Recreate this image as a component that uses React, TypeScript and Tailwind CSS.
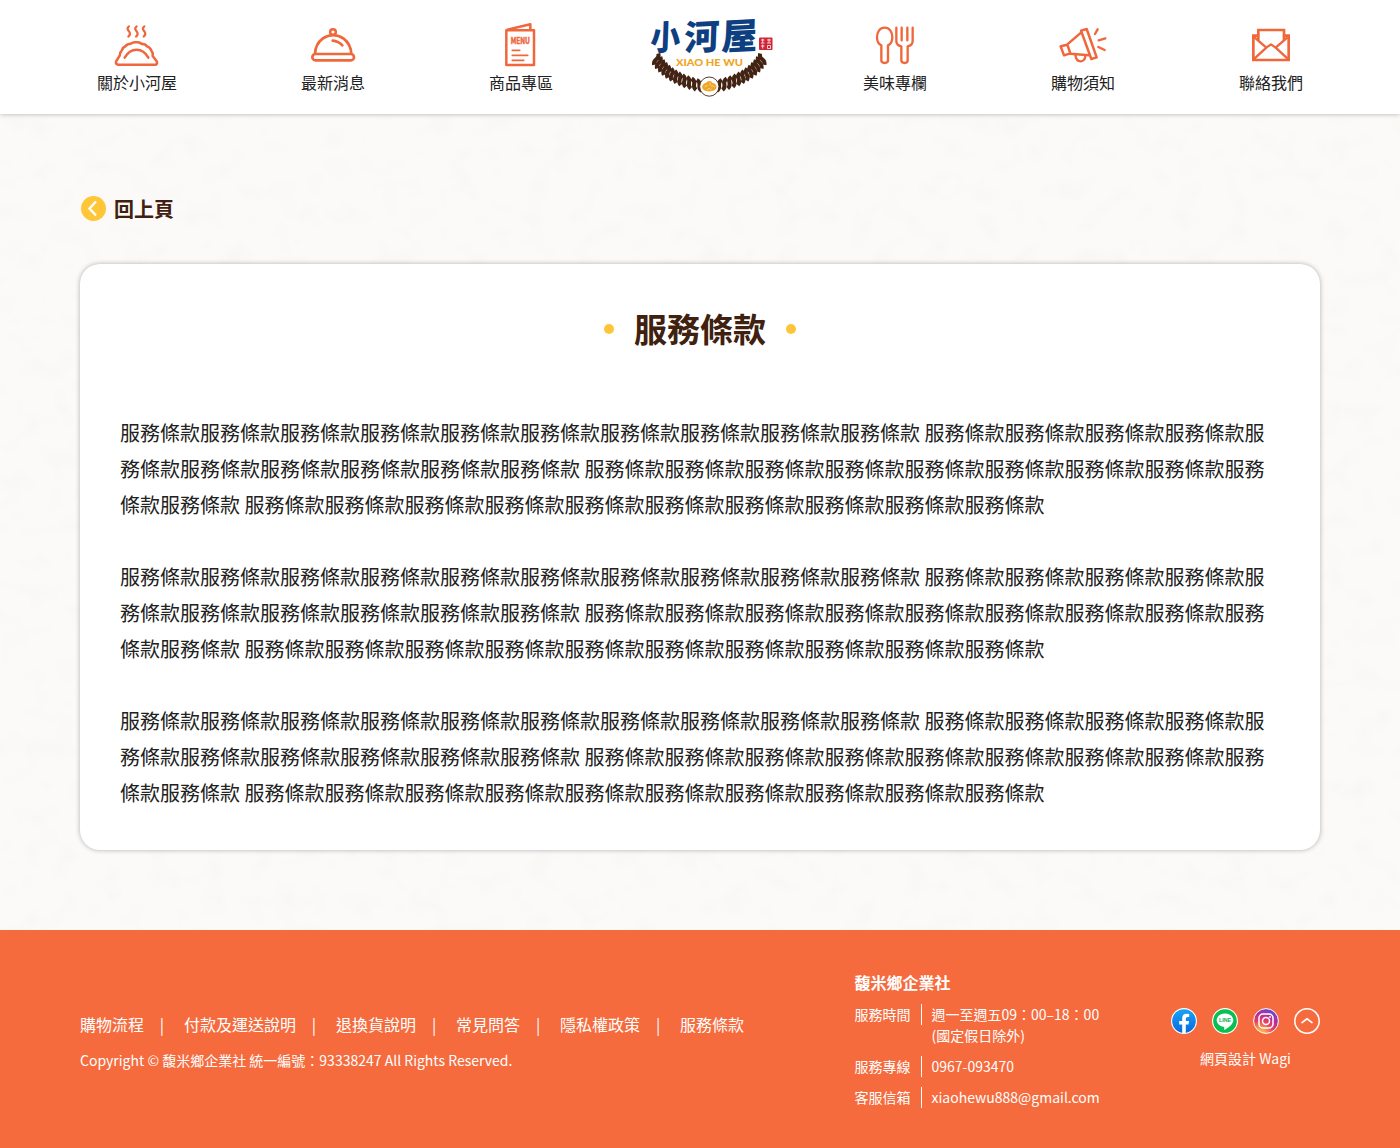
import type { ReactNode } from "react";

const ORANGE = "#ef673b";

function NavIcon({ viewBox, children }: { viewBox: string; children: ReactNode }) {
  return (
    <svg
      viewBox={viewBox}
      className="h-12 w-12"
      fill="none"
      stroke={ORANGE}
      strokeWidth="8"
      strokeLinecap="round"
      strokeLinejoin="round"
    >
      {children}
    </svg>
  );
}

const dumpling = (
  <NavIcon viewBox="69 15 144 144">
    <path d="M83 149H198Q204 145 199 137L188 123Q190 114 184 107Q181 97 171 94Q166 86 156 87Q148 80 139 82Q130 80 122 86Q112 86 107 93Q98 97 95 107Q89 112 89 122L79 138Q75 146 83 149Z" strokeWidth="7.5" />
    <path d="M104 128Q117 104 140 104Q162 104 175 128" strokeWidth="7.5" />
    <path d="M117 34Q110 39 114 45L119 52Q122 59 115 65M140 34Q133 39 137 45L142 52Q145 59 138 65M163 34Q156 39 160 45L165 52Q168 59 161 65" strokeWidth="6.5" />
  </NavIcon>
);

const cloche = (
  <NavIcon viewBox="57 15 144 144">
    <circle cx="129" cy="51" r="8.5" strokeWidth="7.5" />
    <path d="M75 116Q77 86 98 71Q129 50 161 71Q182 87 184 116" />
    <rect x="67" y="117" width="125" height="19" rx="9.5" />
    <path d="M128 77Q146 79 157 91" />
  </NavIcon>
);

const menu = (
  <NavIcon viewBox="51 15 144 144">
    <path d="M79 46H162V150H79ZM82 44L151 28V45" strokeWidth="7.5" />
    <path d="M97 106H119M97 121H143M97 136H131" strokeWidth="5.5" />
    <text
      x="121"
      y="88"
      textAnchor="middle"
      textLength="58"
      lengthAdjust="spacingAndGlyphs"
      fill={ORANGE}
      stroke={ORANGE}
      strokeWidth="1.5"
      className="font-['Noto_Sans_CJK_TC',sans-serif] text-[26px] font-bold"
    >
      MENU
    </text>
  </NavIcon>
);

const cutlery = (
  <NavIcon viewBox="48 15 144 144">
    <path d="M79 91C70 87 66 77 66 67C66 50 75 38 89 38C103 38 112 50 112 67C112 77 108 87 99 91V136Q99 144 89 144Q79 144 79 136Z" strokeWidth="7" />
    <path d="M124 38V78Q124 91 139 94V136Q139 144 149 144Q158 144 158 136V94Q173 91 173 78V38" strokeWidth="7" />
    <path d="M140 38V76M157 38V76" strokeWidth="7" />
  </NavIcon>
);

const megaphone = (
  <NavIcon viewBox="57 15 144 144">
    <path d="M62 94L82 89L91 115L72 121ZM82 88L124 52M91 116L147 121" strokeWidth="7.5" />
    <path d="M123 46L140 41L170 126L154 131Z" strokeWidth="7.5" transform="translate(0 1)" />
    <path d="M106 119Q108 139 122 139Q135 138 136 123" strokeWidth="7" />
    <path d="M165 57L173 43M176 76L196 70M175 96L194 105" strokeWidth="7" />
  </NavIcon>
);

const mail = (
  <NavIcon viewBox="66 15 144 144">
    <path d="M99 62H85V135H191V62H177" strokeLinejoin="miter" />
    <path d="M100 74V45H177V74" strokeLinejoin="miter" />
    <path d="M85 64L124 98L85 134M191 64L152 98L191 134M124 98L138 88L152 98" strokeWidth="7" />
  </NavIcon>
);

function NavItem({ icon, label }: { icon: ReactNode; label: string }) {
  return (
    <a href="#" className="flex flex-col items-center gap-0.5 text-base leading-6 text-[#212121]">
      {icon}
      <span className="whitespace-nowrap">{label}</span>
    </a>
  );
}

/* Rope strands placed along a quadratic curve; mirrored for the right side. */
const strands = Array.from({ length: 12 }, (_, i) => {
  const t = i / 11;
  const u = 1 - t;
  const x = u * u * 6 + 2 * u * t * 19 + t * t * 49;
  const y = u * u * 43 + 2 * u * t * 63 + t * t * 69.5;
  const angle = (Math.atan2(2 * u * 20 + 2 * t * 6.5, 2 * u * 13 + 2 * t * 30) * 180) / Math.PI;
  return { x, y, angle };
});

function Rope() {
  return (
    <g>
      {strands.map((s, i) => (
        <path
          key={i}
          transform={`translate(${s.x} ${s.y}) rotate(${s.angle})`}
          d="M-3.4 -5Q0.6 -3.6 0.4 0Q0.6 3.4 3.8 4.8"
          fill="none"
          stroke="#432313"
          strokeWidth="4"
        />
      ))}
    </g>
  );
}

function Logo() {
  return (
    <svg viewBox="0 0 123 82" className="h-[82px] w-[123px] overflow-visible">
      <g fill="#0e3f80" className="font-['Noto_Sans_CJK_TC',sans-serif] font-black">
        <text transform="translate(0 34.5) rotate(-3) skewX(-5) scale(.88 1)" className="text-[34px]">小</text>
        <text transform="translate(34 34.5) rotate(-3) skewX(-5)" className="text-[35px]">河</text>
        <text transform="translate(71 34) rotate(-3) skewX(-5)" className="text-[36px]">屋</text>
      </g>
      <rect x="109" y="21.5" width="13.5" height="12.5" rx="1" fill="#cf2637" />
      <path d="M111 24h3.5M112.7 22.8v4M111 27h3.5M111 30h3.5M112.7 28.5v4M117 24h4M119 22.8v4M117 27h4M117.5 29.5h3v3h-3z" stroke="#fff" strokeWidth="0.8" fill="none" />
      <Rope />
      <g transform="translate(118.5 0) scale(-1 1)">
        <Rope />
      </g>
      <text x="59.5" y="49.7" textAnchor="middle" textLength="67" lengthAdjust="spacingAndGlyphs" fill="#efa526" className="font-['Lato',sans-serif] text-[9.8px] font-black">
        XIAO HE WU
      </text>
      <circle cx="59.3" cy="70.6" r="9.6" fill="#fff" stroke="#432313" strokeWidth="0.9" />
      <path d="M52 71q1-4 4-4q1-2 3.3-2t3.3 2q3 0 4 4q-.5 4-7.3 4.6Q52.5 75 52 71Z" fill="#efa526" />
      <path d="M54.5 71q1.5-2 3-1M60 66.5v3M61 70q2-1 3.5 1M57 73.5q2-2 4.5 0" fill="none" stroke="#fff4d4" strokeWidth="0.6" />
    </svg>
  );
}

function PaperTexture() {
  return (
    <svg className="absolute inset-0 h-full w-full" aria-hidden="true">
      <filter id="paper" x="0" y="0" width="100%" height="100%">
        <feTurbulence type="fractalNoise" baseFrequency="0.04 0.045" numOctaves="2" seed="8" />
        <feColorMatrix values="0 0 0 0 0.92  0 0 0 0 0.9  0 0 0 0 0.87  1.1 0 0 0 -0.54" />
      </filter>
      <rect width="100%" height="100%" filter="url(#paper)" />
    </svg>
  );
}

function Facebook() {
  return (
    <svg viewBox="0 0 26 26" className="h-[26px] w-[26px]">
      <defs>
        <linearGradient id="fb" x1="0" y1="0" x2="0" y2="1">
          <stop offset="0" stopColor="#18a5f5" />
          <stop offset="1" stopColor="#0867df" />
        </linearGradient>
      </defs>
      <circle cx="13" cy="13" r="12.4" fill="url(#fb)" stroke="#fff" strokeWidth="1.1" />
      <path d="M11.2 25V16.6H8.2V13.1H11.2V10.5Q11.2 5.8 15.6 5.8Q17.2 5.8 18.2 6.1V9.1H16.5Q14.8 9.1 14.8 10.9V13.1H18.1L17.5 16.6H14.8V25Z" fill="#fff" />
    </svg>
  );
}

function Line() {
  return (
    <svg viewBox="0 0 26 26" className="h-[26px] w-[26px]">
      <circle cx="13" cy="13" r="12.4" fill="#06c152" stroke="#fff" strokeWidth="1.1" />
      <path d="M13 5.6C8.3 5.6 4.7 8.5 4.7 12.2C4.7 15.5 7.6 18.1 11.5 18.7C12.7 19 12.3 19.8 12.1 21.2C12.1 21.8 12.5 21.9 13.1 21.5C15.5 20.1 21.3 16.5 21.3 12.2C21.3 8.5 17.7 5.6 13 5.6Z" fill="#fff" />
      <text x="13" y="14" textAnchor="middle" textLength="12" lengthAdjust="spacingAndGlyphs" fill="#06b14b" className="font-['Liberation_Sans',sans-serif] text-[5px] font-bold">
        LINE
      </text>
    </svg>
  );
}

function Instagram() {
  return (
    <svg viewBox="0 0 26 26" className="h-[26px] w-[26px]">
      <defs>
        <radialGradient id="ig" cx="0.25" cy="1.05" r="1.1">
          <stop offset="0" stopColor="#ffd45c" />
          <stop offset="0.25" stopColor="#fb9a4c" />
          <stop offset="0.5" stopColor="#e8415f" />
          <stop offset="0.75" stopColor="#b52e9c" />
          <stop offset="1" stopColor="#5e4bd2" />
        </radialGradient>
      </defs>
      <circle cx="13" cy="13" r="12.4" fill="url(#ig)" stroke="#fff" strokeWidth="1" />
      <g fill="none" stroke="#fff" strokeWidth="1.5">
        <rect x="6" y="6" width="14" height="14" rx="4" />
        <circle cx="13" cy="13" r="3.5" />
      </g>
      <circle cx="17" cy="9" r="0.9" fill="#fff" />
    </svg>
  );
}

function BackToTop() {
  return (
    <svg viewBox="0 0 26 26" className="h-[26px] w-[26px]" fill="none" stroke="#fff" strokeWidth="1.5">
      <circle cx="13" cy="13" r="12.2" />
      <path d="M8 14.6L13 10.8L18 14.6" strokeWidth="1.7" strokeLinecap="round" strokeLinejoin="round" />
    </svg>
  );
}

const phrase = "服務條款".repeat(10);
const paragraph = [phrase, phrase, phrase, phrase].join(" ");

const footerLinks = ["購物流程", "付款及運送說明", "退換貨說明", "常見問答", "隱私權政策", "服務條款"];

const contactRows = [
  { label: "服務時間", lines: ["週一至週五09：00–18：00", "(國定假日除外)"] },
  { label: "服務專線", lines: ["0967-093470"] },
  { label: "客服信箱", lines: ["xiaohewu888@gmail.com"] },
];

export default function App() {
  return (
    <div lang="zh-Hant" className="flex min-h-[1148px] flex-col bg-[#fbfaf8] font-['Noto_Sans_CJK_TC',sans-serif] text-[#212121]">
      <header className="relative z-10 flex h-[114px] items-start bg-white px-[97px] shadow-[0_0_5px_rgba(0,0,0,0.3)]">
        <nav className="flex gap-[124px] pt-5">
          <NavItem icon={dumpling} label="關於小河屋" />
          <NavItem icon={cloche} label="最新消息" />
          <NavItem icon={menu} label="商品專區" />
        </nav>
        <a href="#" className="ml-[97px] pt-4">
          <Logo />
        </a>
        <nav className="ml-auto flex gap-[124px] pt-5">
          <NavItem icon={cutlery} label="美味專欄" />
          <NavItem icon={megaphone} label="購物須知" />
          <NavItem icon={mail} label="聯絡我們" />
        </nav>
      </header>

      <main className="relative h-[816px] px-20 pt-20">
        <PaperTexture />
        <div className="relative">
          <a href="#" className="flex h-[30px] items-center gap-[7px] text-xl font-bold text-[#40210f]">
            <svg viewBox="0 0 27 27" className="-mt-px h-[27px] w-[27px]">
              <circle cx="13.5" cy="13.5" r="12.5" fill="#ffc638" />
              <path d="M16 6.5L9.5 13.5L16 20.5" fill="none" stroke="#fff" strokeWidth="2.4" />
            </svg>
            回上頁
          </a>
          <section className="mt-10 h-[586px] rounded-[20px] bg-white px-10 pt-10 shadow-[0_0_5px_rgba(0,0,0,0.3)]">
            <h1 className="flex h-[50px] items-center justify-center gap-5 text-[33px] font-bold text-[#40210f]">
              <span className="h-2.5 w-2.5 rounded-full bg-[#fec539]" />
              服務條款
              <span className="h-2.5 w-2.5 rounded-full bg-[#fec539]" />
            </h1>
            <div className="mt-[61px] flex flex-col gap-9 text-xl leading-9">
              {[0, 1, 2].map((n) => (
                <p key={n}>{paragraph}</p>
              ))}
            </div>
          </section>
        </div>
      </main>

      <footer className="flex h-[218px] bg-[#f66b3d] px-20 text-white">
        <div className="w-[774.5px] pt-[82px]">
          <ul className="flex text-base leading-6">
            {footerLinks.map((link, i) => (
              <li key={link} className="flex">
                {i > 0 && <span className="mr-1 w-9 text-center">|</span>}
                <a href="#">{link}</a>
              </li>
            ))}
          </ul>
          <p className="mt-3.5 text-sm leading-[21px]">
            Copyright © 馥米鄉企業社 統一編號：93338247 All Rights Reserved.
          </p>
        </div>
        <div className="flex flex-col gap-2.5 pt-10 text-sm leading-[21px]">
          <h2 className="text-base leading-6 font-bold">馥米鄉企業社</h2>
          {contactRows.map((row) => (
            <div key={row.label} className="flex items-start">
              <span className="w-[67px] border-r border-white">{row.label}</span>
              <div className="pl-[10px]">
                {row.lines.map((line) => (
                  <p key={line}>{line}</p>
                ))}
              </div>
            </div>
          ))}
        </div>
        <div className="ml-auto flex flex-col items-center pt-[78px]">
          <div className="flex gap-[15px]">
            <Facebook />
            <Line />
            <Instagram />
            <BackToTop />
          </div>
          <p className="mt-3.5 text-sm leading-[21px]">網頁設計 Wagi</p>
        </div>
      </footer>
    </div>
  );
}
